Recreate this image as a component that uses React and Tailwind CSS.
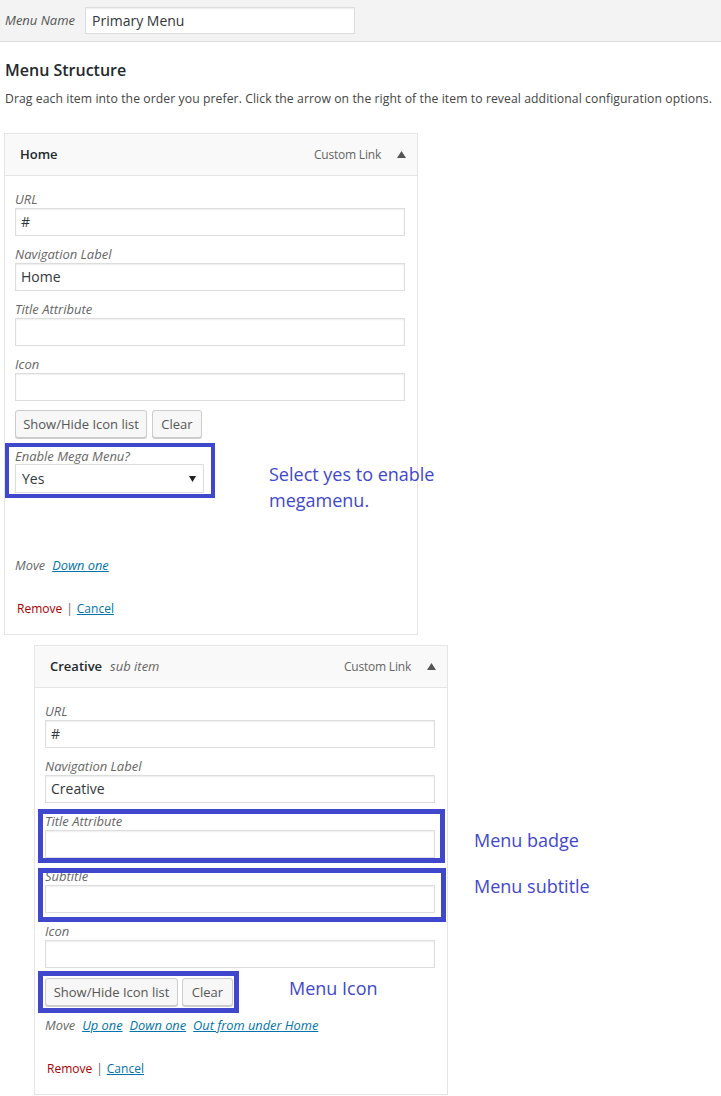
import React from "react";

const font = { fontFamily: '"Open Sans", "Noto Sans", Arial, sans-serif' };

const Field = ({ label, value, className = "" }) => (
  <div className={className}>
    <div className="h-[18px] text-[13px] leading-[18px] italic text-[#666]">{label}</div>
    <div className="h-[28px] w-full border border-[#ddd] bg-white px-[5px] text-[14px] leading-[26px] text-[#32373c] shadow-[inset_0_1px_2px_rgba(0,0,0,0.07)]">
      {value}
    </div>
  </div>
);

const Btn = ({ children, w }) => (
  <div
    className={`${w} h-[28px] rounded-[3px] border border-[#ccc] bg-[#f7f7f7] text-center text-[13px] leading-[26px] text-[#555] shadow-[0_1px_0_#ccc]`}
  >
    {children}
  </div>
);

const Note = ({ children, className }) => (
  <div className={`absolute whitespace-nowrap text-[18px] leading-[26px] text-[#3f48cc] ${className}`}>{children}</div>
);

const CardHeader = ({ title, sub }) => (
  <div className="flex h-[42px] items-center border-b border-[#e5e5e5] bg-[#f9f9f9] pl-[15px] pr-[11px]">
    <span className="text-[13px] font-semibold text-[#23282d]">{title}</span>
    {sub && <span className="ml-[8px] text-[13px] italic text-[#666]">{sub}</span>}
    <span className="ml-auto text-[12px] tracking-[-0.2px] text-[#666]">Custom Link</span>
    <svg className="ml-[16px]" width="9" height="7" viewBox="0 0 9 7">
      <path d="M4.5 0 L9 7 L0 7 Z" fill="#555" />
    </svg>
  </div>
);

const Footer = ({ moves }) => (
  <>
    <div className="flex h-[18px] items-center gap-[7px] text-[12.8px] leading-[18px]">
      <span className="italic text-[#666]">Move</span>
      {moves.map((m) => (
        <span key={m} className="italic text-[#0073aa] underline">
          {m}
        </span>
      ))}
    </div>
    <div className="mt-[26px] flex h-[18px] items-center pl-[2px] text-[12px] leading-[18px]">
      <span className="text-[#a00]">Remove</span>
      <span className="mx-[4px] text-[#666]">|</span>
      <span className="text-[#0073aa] underline">Cancel</span>
    </div>
  </>
);

export default function App() {
  return (
    <div className="min-h-[1096px] w-[721px] bg-white" style={font}>
      {/* Menu name bar */}
      <div className="flex h-[42px] items-center border-b border-[#dfdfdf] bg-[#f3f3f3] pl-[5px]">
        <span className="w-[80px] text-[13px] italic text-[#555]">Menu Name</span>
        <div className="h-[27px] w-[270px] border border-[#ddd] bg-white pl-[6px] text-[14px] leading-[25px] text-[#32373c] shadow-[inset_0_1px_2px_rgba(0,0,0,0.07)]">
          Primary Menu
        </div>
      </div>

      <div className="px-[5px]">
        <h2 className="mt-[17px] text-[16px] font-semibold leading-[22px] text-[#23282d]">Menu Structure</h2>
        <p className="mt-[9px] whitespace-nowrap text-[12.2px] leading-[18px] tracking-[0.08px] text-[#444]">
          Drag each item into the order you prefer. Click the arrow on the right of the item to reveal additional configuration options.
        </p>
      </div>

      {/* Home item */}
      <div className="ml-[4px] mt-[25px] w-[414px] border border-[#e5e5e5] bg-white">
        <CardHeader title="Home" />
        <div className="pb-[16px] pl-[10px] pr-[12px] pt-[14px]">
          <Field label="URL" value="#" />
          <Field className="mt-[9px]" label="Navigation Label" value="Home" />
          <Field className="mt-[9px]" label="Title Attribute" value="" />
          <Field className="mt-[9px]" label="Icon" value="" />
          <div className="mt-[9px] flex gap-[5px]">
            <Btn w="w-[132px]">Show/Hide Icon list</Btn>
            <Btn w="w-[50px]">Clear</Btn>
          </div>
          <div className="relative mt-[10px] w-[189px]">
            <div className="pointer-events-none absolute -bottom-[5px] -left-[10px] -right-[11px] -top-[5px] border-[4px] border-[#3f48cc]" />
            <div className="h-[16px] text-[13px] leading-[16px] italic text-[#666]">Enable Mega Menu?</div>
            <div className="flex h-[29px] items-center border border-[#ddd] bg-white pl-[6px] pr-[7px] text-[14px] text-[#32373c]">
              Yes
              <svg className="ml-auto" width="7" height="6" viewBox="0 0 7 6">
                <path d="M0 0 L7 0 L3.5 6 Z" fill="#222" />
              </svg>
            </div>
            <Note className="left-[254px] top-[13px]">
              Select yes to enable
              <br />
              megamenu.
            </Note>
          </div>
          <div className="mt-[63px]">
            <Footer moves={["Down one"]} />
          </div>
        </div>
      </div>

      {/* Creative sub item */}
      <div className="ml-[34px] mt-[10px] w-[414px] border border-[#e5e5e5] bg-white">
        <CardHeader title="Creative" sub="sub item" />
        <div className="pb-[16px] pl-[10px] pr-[12px] pt-[14px]">
          <Field label="URL" value="#" />
          <Field className="mt-[9px]" label="Navigation Label" value="Creative" />
          <div className="relative mt-[9px]">
            <div className="pointer-events-none absolute -bottom-[5px] -left-[7px] -right-[10px] -top-[3px] border-[5px] border-[#3f48cc]" />
            <Field label="Title Attribute" value="" />
            <Note className="left-[429px] top-[15px]">Menu badge</Note>
          </div>
          <div className="relative mt-[9px]">
            <div className="pointer-events-none absolute -bottom-[9px] -left-[7px] -right-[11px] top-[1px] border-[5px] border-[#3f48cc]" />
            <Field label="Subtitle" value="" />
            <Note className="left-[429px] top-[6px]">Menu subtitle</Note>
          </div>
          <Field className="mt-[9px]" label="Icon" value="" />
          <div className="relative mt-[10px] flex w-[188px] gap-[4px]">
            <div className="pointer-events-none absolute -bottom-[7px] -left-[7px] -right-[6px] -top-[7px] border-[5px] border-[#3f48cc]" />
            <Btn w="w-[133px]">Show/Hide Icon list</Btn>
            <Btn w="w-[51px]">Clear</Btn>
            <Note className="left-[244px] top-[-3px]">Menu Icon</Note>
          </div>
          <div className="mt-[10px]">
            <Footer moves={["Up one", "Down one", "Out from under Home"]} />
          </div>
        </div>
      </div>
    </div>
  );
}
